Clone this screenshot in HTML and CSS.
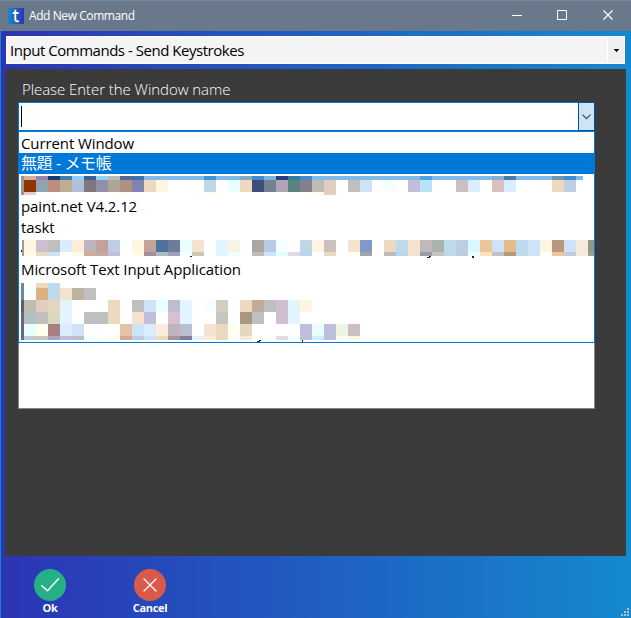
FILE: index.html
```
<!DOCTYPE html>
<html lang="en">
<head>
<meta charset="utf-8">
<title>Add New Command</title>
<link rel="stylesheet" href="styles.css">
</head>
<body>
<div class="window">
  <header class="titlebar">
    <svg class="logo" width="16" height="16" viewBox="0 0 16 16"><defs><linearGradient id="lg"><stop stop-color="#1489cf"/><stop offset="1" stop-color="#2c34b4"/></linearGradient></defs><path fill="url(#lg)" d="M0 0h16v16H0z"/><path d="M7.300 1.800V11q0 2.300 2 2.300h1.600M4.800 5h5.800" fill="none" stroke="#fff" stroke-width="1.800"/></svg>
    <span class="caption">Add New Command</span>
    <svg class="controls" width="138" height="30" viewBox="0 0 138 30" fill="none" stroke="#fff"><path d="M19 14.500h10M64.500 9.500h9v9h-9z"/><path d="M110.500 9.500l9 9m0-9l-9 9" stroke-width="1.200"/></svg>
  </header>
  <main class="client">
    <div class="command-select"><span class="command-text">Input Commands - Send Keystrokes</span><span class="command-arrow"><svg width="5" height="3" viewBox="0 0 5 3" shape-rendering="crispEdges"><path d="M0 0h5v1H4v1H3v1H2V2H1V1H0z"/></svg></span></div>
    <section class="panel">
      <label class="label">Please Enter the Window name</label>
      <div class="combo"><span class="caret"></span><span class="combo-button"><svg width="9" height="6" viewBox="0 0 9 6" fill="none" stroke="#444" stroke-width="1.200"><path d="M.5.7l4 4 4-4"/></svg></span></div>
      <div class="field">
        <ul class="options">
          <li><span>Current Window</span></li>
          <li class="selected"><span class="memo">無題 - メモ帳</span></li>
          <li><svg class="mosaic" width="575" height="21" viewBox="19 174 575 21" shape-rendering="crispEdges" fill="none">
            <g stroke-width="4"><path stroke="#7ebaea" d="M24 178h559"/><path stroke="#889a98" d="M21 178h3"/><path stroke="#d2b0a0" d="M24 178h12"/><path stroke="#9583ad" d="M36 178h12"/><path stroke="#123d70" d="M48 178h12"/><path stroke="#427caf" d="M60 178h12"/><path stroke="#8dcff6" d="M72 178h12"/><path stroke="#3b6196" d="M84 178h12"/><path stroke="#8cd5f3" d="M96 178h12"/><path stroke="#bbbdb5" d="M108 178h12"/><path stroke="#506998" d="M120 178h12"/><path stroke="#3d6fae" d="M132 178h12"/><path stroke="#3d94da" d="M204 178h12"/><path stroke="#83a9c3" d="M240 178h12"/><path stroke="#408bd1" d="M252 178h12M300 178h12M564 178h12"/><path stroke="#75b9d8" d="M264 178h12"/><path stroke="#253b84" d="M276 178h12"/><path stroke="#2b7c9e" d="M288 178h12"/><path stroke="#4aa1e4" d="M420 178h12"/><path stroke="#7eb4d1" d="M492 178h12"/><path stroke="#4a7ba8" d="M504 178h12"/><path stroke="#6b98b2" d="M552 178h12"/></g>
            <g stroke-width="12"><path stroke="#9a9b8e" d="M21 186h3"/><path stroke="#903400" d="M24 186h12"/><path stroke="#90a3b0" d="M36 186h12"/><path stroke="#bd8c80" d="M48 186h12"/><path stroke="#bead8e" d="M60 186h12"/><path stroke="#afbfdc" d="M72 186h12"/><path stroke="#81767e" d="M84 186h12"/><path stroke="#918fa9" d="M96 186h12"/><path stroke="#b0a399" d="M108 186h12"/><path stroke="#b09180" d="M120 186h12"/><path stroke="#8281b4" d="M132 186h12"/><path stroke="#ecd9c0" d="M144 186h12M240 186h12M552 186h12"/><path stroke="#fff5e1" d="M156 186h12"/><path stroke="#c0d8e4" d="M204 186h12"/><path stroke="#e8ffff" d="M228 186h12"/><path stroke="#404d7c" d="M252 186h12"/><path stroke="#758090" d="M264 186h12"/><path stroke="#b1a5b4" d="M276 186h12"/><path stroke="#598380" d="M288 186h12"/><path stroke="#82808e" d="M300 186h12"/><path stroke="#bdbdb5" d="M312 186h12"/><path stroke="#e3cdc0" d="M324 186h12"/><path stroke="#bfbfbf" d="M348 186h12"/><path stroke="#cee3f8" d="M360 186h12"/><path stroke="#f5ffff" d="M384 186h12"/><path stroke="#bfbfdb" d="M408 186h12"/><path stroke="#b8e3f5" d="M420 186h12"/><path stroke="#cdbfbf" d="M456 186h12"/><path stroke="#d9edff" d="M468 186h12M504 186h12"/><path stroke="#dcbfc0" d="M492 186h12"/><path stroke="#bfcde4" d="M564 186h12"/></g>
            <g stroke-width="4"><path stroke="#9a9b8e" d="M21 194h3"/><path stroke="#e5cfc5" d="M24 194h12M324 194h12"/><path stroke="#fffff0" d="M120 194h12M204 194h12M312 194h12"/></g>
          </svg></li>
          <li><span>paint.net V4.2.12</span></li>
          <li><span>taskt</span></li>
          <li><svg class="mosaic" width="575" height="21" viewBox="19 237 575 21" shape-rendering="crispEdges" fill="none">
            <g stroke-width="12"><path stroke="#9e999b" d="M22 246h2"/><path stroke="#fff5e1" d="M24 246h12M132 246h12M312 246h12M540 246h12"/><path stroke="#cdbfcf" d="M36 246h12"/><path stroke="#bfbfbf" d="M48 246h12"/><path stroke="#d9edff" d="M60 246h12"/><path stroke="#ffebda" d="M72 246h12"/><path stroke="#bfb4be" d="M84 246h12"/><path stroke="#c4a29b" d="M96 246h12M144 246h12"/><path stroke="#bfcde4" d="M108 246h12M456 246h12"/><path stroke="#4e729c" d="M156 246h12"/><path stroke="#6c7d99" d="M168 246h12"/><path stroke="#e8ffff" d="M180 246h12"/><path stroke="#f5e2cf" d="M192 246h12M348 246h12M408 246h12"/><path stroke="#e1f4ff" d="M216 246h12"/><path stroke="#f5f5e1" d="M228 246h12"/><path stroke="#aaa6a2" d="M252 246h12"/><path stroke="#b5cce4" d="M264 246h12"/><path stroke="#f5ffff" d="M276 246h12"/><path stroke="#bfd7e3" d="M300 246h12"/><path stroke="#cdbfbf" d="M324 246h12"/><path stroke="#8199c7" d="M360 246h12"/><path stroke="#ecd9c0" d="M384 246h12"/><path stroke="#bfdaed" d="M396 246h12M444 246h12M516 246h12"/><path stroke="#bfb9bc" d="M420 246h12"/><path stroke="#abb4ac" d="M432 246h12"/><path stroke="#d9f7ff" d="M468 246h12"/><path stroke="#ecc69a" d="M480 246h12"/><path stroke="#cee3f8" d="M492 246h12M528 246h12M564 246h12"/><path stroke="#e3bc8d" d="M504 246h12"/><path stroke="#b9977f" d="M552 246h12"/><path stroke="#f4ebd8" d="M576 246h12"/><path stroke="#969783" d="M588 246h6"/></g>
            <g stroke-width="4"><path stroke="#9e999b" d="M22 254h2"/><path stroke="#fff9e8" d="M24 254h12M72 254h12M132 254h12"/><path stroke="#ecd9c0" d="M36 254h12M324 254h12"/><path stroke="#cee3f8" d="M48 254h12"/><path stroke="#d0ac96" d="M84 254h12"/><path stroke="#bfaaa8" d="M96 254h12"/><path stroke="#bfbfdb" d="M108 254h12"/><path stroke="#a08f9d" d="M144 254h12"/><path stroke="#adbdbd" d="M156 254h12"/><path stroke="#a0a0be" d="M168 254h12"/><path stroke="#f0ffff" d="M180 254h12M228 254h12M468 254h12"/><path stroke="#c8c8b5" d="M192 254h12"/><path stroke="#e1f4ff" d="M216 254h12"/><path stroke="#bfbbbd" d="M252 254h12M384 254h12"/><path stroke="#cee3f8" d="M264 254h12"/><path stroke="#dfffff" d="M276 254h12"/><path stroke="#e3d9e3" d="M288 254h12"/><path stroke="#b4d9ef" d="M300 254h12M396 254h12"/><path stroke="#fffff0" d="M348 254h12"/><path stroke="#a3a3ad" d="M360 254h12"/><path stroke="#f5e2cf" d="M408 254h12"/><path stroke="#999ba7" d="M420 254h12"/><path stroke="#c8c5be" d="M432 254h12"/><path stroke="#bfdaed" d="M444 254h12M516 254h12"/><path stroke="#bfcbd8" d="M456 254h12"/><path stroke="#ffe3be" d="M480 254h12"/><path stroke="#bfc3c7" d="M492 254h12"/><path stroke="#b9977f" d="M504 254h12"/><path stroke="#cee3f8" d="M528 254h12"/><path stroke="#ecc69a" d="M552 254h12"/><path stroke="#bfcbdf" d="M564 254h12"/><path stroke="#f4ebd8" d="M576 254h12"/><path stroke="#9b9fa4" d="M588 254h6"/></g>
            <path fill="#222" d="M190 256h2v1h-2zM427 257h2v-1h2v1h-1v1h-3zM472 256h2v2h-2zM21 250h1v2h-1z"/>
          </svg></li>
          <li><span>Microsoft Text Input Application</span></li>
          <li class="tall"><svg class="mosaic" width="575" height="63" viewBox="19 279 575 63" shape-rendering="crispEdges" fill="none">
            <g stroke-width="5"><path stroke="#708797" d="M21 285.500h3"/><path stroke="#ecd9c0" d="M36 285.500h12"/><path stroke="#bfdaed" d="M48 285.500h12"/></g>
            <g stroke-width="12"><path stroke="#708797" d="M21 294h3"/><path stroke="#f5ffff" d="M24 294h12M204 306h12"/><path stroke="#dbb17f" d="M36 294h12"/><path stroke="#bfdaed" d="M48 294h12"/><path stroke="#f5e2cf" d="M60 294h12M132 318h12M204 330h12"/><path stroke="#beb39e" d="M72 294h12"/><path stroke="#bfbfbf" d="M84 294h12M84 318h24M132 306h12M264 306h12M252 318h12"/>
            <path stroke="#665f59" d="M21 306h3"/><path stroke="#bfbdb3" d="M24 306h12"/><path stroke="#e3cdc0" d="M36 306h12"/><path stroke="#e3d8bd" d="M48 306h12M240 330h12"/><path stroke="#e1f4ff" d="M60 306h12M60 318h12M180 306h12M180 318h12M288 306h12M288 318h12"/><path stroke="#ecd9c0" d="M108 306h12M108 318h12M240 306h12M216 330h12"/><path stroke="#cee3f8" d="M144 306h12M72 330h12M132 330h12"/><path stroke="#e8ffff" d="M156 306h12M24 330h12M312 330h12"/><path stroke="#bfbccd" d="M168 306h12"/><path stroke="#d0cfbd" d="M216 306h12"/><path stroke="#bfab98" d="M252 306h12"/><path stroke="#cdbfcf" d="M276 306h12M276 318h12"/><path stroke="#fff5e1" d="M300 306h12"/>
            <path stroke="#6c6573" d="M21 318h3"/><path stroke="#b3bfc1" d="M24 318h12"/><path stroke="#bfbfbd" d="M36 318h12"/><path stroke="#d8d9be" d="M48 318h12"/><path stroke="#bfbfdb" d="M144 318h12M300 330h12M324 330h12"/><path stroke="#dabfce" d="M168 318h12"/><path stroke="#c5c6be" d="M216 318h12"/><path stroke="#aa967d" d="M240 318h12"/>
            <path stroke="#666780" d="M21 330h3"/><path stroke="#fffff0" d="M36 330h12M228 330h12"/><path stroke="#a67f80" d="M48 330h12"/><path stroke="#d9edff" d="M60 330h12M144 330h12"/><path stroke="#e3c3a3" d="M120 330h12"/><path stroke="#ffebda" d="M156 330h12"/><path stroke="#bfb4be" d="M168 330h12"/><path stroke="#bbbece" d="M180 330h12"/><path stroke="#ecf4e2" d="M336 330h12"/><path stroke="#cdbfbf" d="M348 330h12"/></g>
            <g stroke-width="4"><path stroke="#666780" d="M21 338h3"/><path stroke="#bfcbd8" d="M24 338h12"/><path stroke="#c8c5be" d="M36 338h12"/><path stroke="#aaa6bd" d="M48 338h12"/><path stroke="#bfbfdb" d="M60 338h12"/><path stroke="#bfbdc8" d="M72 338h12"/><path stroke="#f0ffff" d="M84 338h12M288 338h12M336 338h12"/><path stroke="#fffff0" d="M108 338h12"/><path stroke="#d0ac96" d="M120 338h12"/><path stroke="#bfcde4" d="M132 338h12"/><path stroke="#cee3f8" d="M144 338h12"/><path stroke="#ecd9c0" d="M156 338h12M216 338h12"/><path stroke="#a3969d" d="M168 338h12"/><path stroke="#7e7f9a" d="M180 338h12"/><path stroke="#e1f4ff" d="M192 338h12"/><path stroke="#ffebda" d="M204 338h12"/><path stroke="#f4ebd8" d="M240 338h12"/><path stroke="#e3d9e3" d="M276 338h12"/><path stroke="#bfbfdb" d="M300 338h12M324 338h12"/><path stroke="#d0edff" d="M312 338h12"/><path stroke="#fff5e1" d="M348 338h12"/></g>
            <path fill="#222" d="M257 341h2v-1h2v1h-1v1h-3zM302 340h1v2h-1z"/>
          </svg></li>
        </ul>
      </div>
    </section>
    <footer class="actions">
      <div class="action"><svg width="32" height="32" viewBox="0 0 32 32" fill="none"><circle cx="16" cy="16" r="16" fill="#26b086"/><path d="M7.500 16.500l6 5.300L24.500 9.800" stroke="#fff" stroke-width="1.300" stroke-linecap="round"/></svg><span>Ok</span></div>
      <div class="action"><svg width="32" height="32" viewBox="0 0 32 32" fill="none"><circle cx="16" cy="16" r="16" fill="#da5a4a"/><path d="M10 10l12 12m0-12L10 22" stroke="#fff" stroke-width="1.300" stroke-linecap="round"/></svg><span>Cancel</span></div>
      <svg class="grip" width="8" height="8" viewBox="0 0 8 8" fill="#bfbfbf" shape-rendering="crispEdges"><path d="M6 0h2v2H6zM3 3h2v2H3zM6 3h2v2H6zM0 6h2v2H0zM3 6h2v2H3zM6 6h2v2H6z"/></svg>
    </footer>
  </main>
</div>
</body>
</html>
```
FILE: styles.css
```
* { box-sizing: border-box; }
body { margin: 0; font-family: "Open Sans", "Noto Sans CJK JP", sans-serif; overflow: hidden; }
svg { display: block; flex: none; }
span { white-space: nowrap; }
.window { width: 631px; height: 618px; display: flex; flex-direction: column; }
.titlebar { height: 31px; display: flex; align-items: center; padding-left: 8px; background: #69788a; border-top: 1px solid #788898; color: #fff; }
.caption { margin-left: 5px; font-size: 12px; line-height: 30px; letter-spacing: -.42px; }
.controls { margin-left: auto; }
.client { flex: 1; display: flex; flex-direction: column; padding: 5px 5px 0 4px; border-left: 1px solid #148acb; background: linear-gradient(90deg, #2c34b4, #1489cf); }
.command-select { height: 28px; margin: 0 1px; display: flex; border: 1px solid #fff; background: #f4f4f4; }
.command-text { flex: 1; padding-left: 3px; font-size: 15px; line-height: 27px; letter-spacing: -.47px; }
.command-arrow { width: 17px; display: flex; align-items: center; justify-content: center; border-left: 1px solid #fff; background: #f0f0f0; }
.panel { height: 487px; margin-top: 5px; padding: 9px 31px 0 13px; background: #3b3b3b; }
.label { display: block; height: 24px; padding-left: 4px; color: #fff; font-size: 15px; font-weight: 300; line-height: 23px; letter-spacing: -.06px; }
.combo { height: 29px; display: flex; border: 1px solid #0078d7; background: #fff; }
.caret { width: 1px; height: 21px; margin: 3px 0 0 2px; background: #000; }
.combo-button { width: 17px; margin: -1px -1px -1px auto; display: flex; align-items: center; justify-content: center; border: 1px solid #005499; background: #cce4f7; }
.field { height: 278px; border: solid #82878c; border-width: 0 1px 1px; background: #fff; }
.options { margin: 0 -1px; padding: 0; border: 1px solid #0078d7; list-style: none; background: #fff; font-size: 15px; line-height: 23px; }
.options li { height: 21px; padding-left: 2px; }
.options .tall { height: 63px; }
.options .selected { background: #0078d7; color: #fff; }
.options .memo { font-size: 16px; line-height: 21px; letter-spacing: -.4px; }
.options .mosaic { margin-left: -2px; }
.options span { display: block; letter-spacing: -.1px; }
.actions { height: 62px; display: flex; padding: 13px 0 0; position: relative; }
.action { width: 100px; padding-right: 10px; display: flex; flex-direction: column; align-items: center; color: #fff; font-size: 11px; font-weight: 700; line-height: 14px; letter-spacing: -.3px; }
.grip { position: absolute; right: -3px; bottom: 2px; }
```
